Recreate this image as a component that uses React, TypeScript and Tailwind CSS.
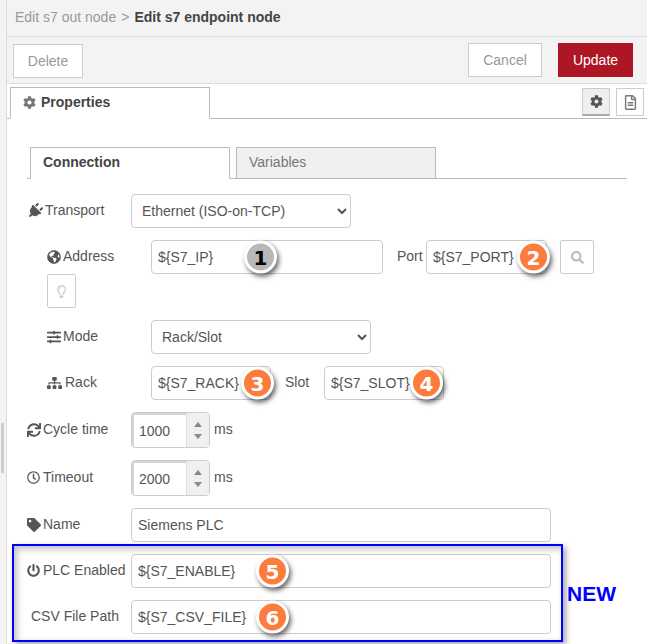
import React from "react";
import {
  FaCog, FaPlug, FaGlobeAmericas, FaSlidersH, FaSitemap, FaSync, FaRegClock, FaTag,
  FaPowerOff, FaSearch, FaRegLightbulb, FaRegFileAlt,
} from "react-icons/fa";

function Badge({ n, className, gray }: { n: number; className: string; gray?: boolean }) {
  return (
    <span
      className={`absolute top-1/2 -translate-y-1/2 w-[33px] h-[33px] rounded-full border-[3px] border-white flex items-center justify-center font-bold text-[20px] leading-none shadow-[2px_3px_5px_rgba(0,0,0,0.6)] font-['DejaVu_Sans',sans-serif] ${gray ? "bg-[#b8b8b8] text-black" : "bg-[#fb7c3c] text-white"} ${className}`}
    >
      {n}
    </span>
  );
}

function Label({ icon, text, className }: { icon?: React.ReactNode; text: string; className: string }) {
  return (
    <div className={`flex items-center h-[34px] gap-[2px] shrink-0 pb-[1px] ${className}`}>
      {icon}
      <span>{text}</span>
    </div>
  );
}

function TextBox({ value, className, children }: { value: string; className: string; children?: React.ReactNode }) {
  return (
    <div className={`relative h-[34px] shrink-0 ${className}`}>
      <input
        readOnly
        value={value}
        className="w-full h-full px-[6px] border border-[#ccc] rounded-[4px] bg-white text-[#555] text-[14px] outline-none"
      />
      {children}
    </div>
  );
}

function Spin({ value }: { value: string }) {
  return (
    <div className="flex w-[79px] h-[36px] border border-[#ccc] rounded-[4px] overflow-hidden bg-white">
      <div className="flex-1 flex items-center pl-[5px] text-[#555] text-[14px] border-l-2 border-t-2 border-[#d4d4d4] pt-[1px]">{value}</div>
      <div className="w-[23px] bg-[#f0f0f0] border-l border-[#ddd] flex flex-col items-center justify-center gap-[7px]">
        <span className="w-0 h-0 border-x-[4px] border-x-transparent border-b-[5px] border-b-[#888]" />
        <span className="w-0 h-0 border-x-[4px] border-x-transparent border-t-[5px] border-t-[#888]" />
      </div>
    </div>
  );
}

export default function App() {
  const icon = "text-[14px] text-[#555] shrink-0";
  return (
    <div className="relative w-[647px] h-[644px] overflow-hidden flex bg-white text-[14px] text-[#555] font-['Liberation_Sans',Arial,sans-serif]">
      <div className="w-[7px] shrink-0 bg-[#f3f3f3] border-r border-[#ddd] pl-[1px] pt-[423px]">
        <div className="w-[3px] h-[50px] bg-[#ccc]" />
      </div>
      <div className="flex-1 flex flex-col min-w-0">
        <div className="h-[37px] shrink-0 bg-[#f3f3f3] border-b border-[#ddd] flex items-center pl-[8px] pb-[2px]">
          <span className="text-[#999]">Edit s7 out node</span>
          <span className="text-[#999] ml-[5px]">&gt;</span>
          <span className="font-bold text-[#444] ml-[5px]">Edit s7 endpoint node</span>
        </div>
        <div className="h-[47px] shrink-0 bg-[#f3f3f3] border-b border-[#ddd] flex items-start pl-[6px] pr-[14px]">
          <button className="mt-[7px] w-[70px] h-[34px] bg-white border border-[#ccc] text-[#999]">Delete</button>
          <button className="ml-auto mt-[6px] w-[74px] h-[34px] bg-white border border-[#ccc] text-[#999]">Cancel</button>
          <button className="ml-[16px] mt-[6px] w-[75px] h-[34px] bg-[#ad1625] text-white">Update</button>
        </div>
        <div className="h-[35px] shrink-0 border-b border-[#bbb] relative flex items-end pl-[3px] pr-[3px]">
          <div className="-mb-px w-[200px] h-[32px] bg-white border border-[#bbb] border-b-white flex items-center pl-[12px] gap-[5px] font-bold text-[#444] pb-[1px]">
            <FaCog className="text-[13px] text-[#777]" />
            <span>Properties</span>
          </div>
          <div className="ml-auto self-start mt-[4px] w-[28px] h-[28px] bg-[#efefef] border border-[#ccc] border-b-2 border-b-[#aaa] flex items-center justify-center text-[#555] text-[13px]">
            <FaCog />
          </div>
          <div className="ml-[6px] self-start mt-[4px] w-[28px] h-[28px] bg-white border border-[#ccc] flex items-center justify-center text-[#777] text-[15px]">
            <FaRegFileAlt />
          </div>
        </div>

        <div className="relative flex-1 pl-[20px]">
          <div className="mt-[28px] h-[32px] w-[600px] border-b border-[#bbb] flex items-end pl-[3px] gap-[6px]">
            <div className="-mb-px w-[200px] h-[32px] bg-white border border-[#bbb] border-b-white flex items-center pl-[12px] font-bold text-[#444] pb-[1px]">Connection</div>
            <div className="-mb-px w-[200px] h-[32px] bg-[#f0f0f0] border border-[#bbb] flex items-center pl-[12px] text-[#777] pb-[1px]">Variables</div>
          </div>

          <div className="mt-[15px] flex items-center">
            <Label className="w-[104px]" icon={<FaPlug className="text-[#555] shrink-0 rotate-45 w-[16px] h-[16px]" />} text="Transport" />
            <select className="w-[220px] h-[34px] px-[6px] border border-[#ccc] rounded-[4px] bg-white text-[#555] text-[14px]">
              <option>Ethernet (ISO-on-TCP)</option>
            </select>
          </div>

          <div className="mt-[12px] ml-[20px]">
            <div className="flex items-center">
              <Label className="w-[104px]" icon={<FaGlobeAmericas className={icon} />} text="Address" />
              <TextBox value="${S7_IP}" className="w-[232px]">
                <Badge n={1} gray className="left-[93px]" />
              </TextBox>
              <Label className="ml-[14px] w-[29px]" text="Port" />
              <TextBox value="${S7_PORT}" className="w-[121px]">
                <Badge n={2} className="left-[91px]" />
              </TextBox>
              <button className="ml-[13px] w-[34px] h-[34px] border border-[#ccc] rounded-[2px] flex items-center justify-center text-[#bbb] text-[13px]">
                <FaSearch />
              </button>
            </div>
            <button className="w-[29px] h-[34px] border border-[#ccc] rounded-[2px] flex items-center justify-center text-[#ccc] text-[13px]">
              <FaRegLightbulb />
            </button>
            <div className="mt-[12px] flex items-center">
              <Label className="w-[104px]" icon={<FaSlidersH className={icon} />} text="Mode" />
              <select className="w-[220px] h-[34px] px-[6px] border border-[#ccc] rounded-[4px] bg-white text-[#555] text-[14px]">
                <option>Rack/Slot</option>
              </select>
            </div>
            <div className="mt-[12px] flex items-center">
              <Label className="w-[104px] gap-[3px]" icon={<FaSitemap className="text-[12px] text-[#555] shrink-0 w-[15px]" />} text="Rack" />
              <TextBox value="${S7_RACK}" className="w-[120px]">
                <Badge n={3} className="left-[90px]" />
              </TextBox>
              <Label className="ml-[14px] w-[39px]" text="Slot" />
              <TextBox value="${S7_SLOT}" className="w-[120px]">
                <Badge n={4} className="left-[86px]" />
              </TextBox>
            </div>
          </div>

          <div className="mt-[12px] flex items-center">
            <Label className="w-[104px]" icon={<FaSync className={icon} />} text="Cycle time" />
            <Spin value="1000" />
            <span className="ml-[4px] pb-[1px]">ms</span>
          </div>
          <div className="mt-[12px] flex items-center">
            <Label className="w-[104px] gap-[3px]" icon={<FaRegClock className="text-[13px] text-[#555] shrink-0" />} text="Timeout" />
            <Spin value="2000" />
            <span className="ml-[4px] pb-[1px]">ms</span>
          </div>
          <div className="mt-[12px] flex items-center">
            <Label className="w-[104px]" icon={<FaTag className={icon} />} text="Name" />
            <TextBox value="Siemens PLC" className="w-[420px]" />
          </div>
          <div className="mt-[12px] flex items-center">
            <Label className="w-[104px] gap-[3px]" icon={<FaPowerOff className="text-[13px] text-[#555] shrink-0" />} text="PLC Enabled" />
            <TextBox value="${S7_ENABLE}" className="w-[420px]">
              <Badge n={5} className="left-[125px]" />
            </TextBox>
          </div>
          <div className="mt-[12px] flex items-center">
            <Label className="w-[104px] pl-[4px]" text="CSV File Path" />
            <TextBox value="${S7_CSV_FILE}" className="w-[420px]">
              <Badge n={6} className="left-[125px]" />
            </TextBox>
          </div>

          <div className="absolute left-[5px] top-[425px] w-[551px] h-[98px] border-2 border-[#0000ff] pointer-events-none shadow-[3px_3px_6px_rgba(0,0,0,0.35),inset_3px_3px_6px_rgba(0,0,0,0.25)]" />
          <div className="absolute left-[560px] top-[463px] text-[21px] leading-[24px] font-bold text-[#0000ff]">NEW</div>
        </div>
      </div>
    </div>
  );
}
